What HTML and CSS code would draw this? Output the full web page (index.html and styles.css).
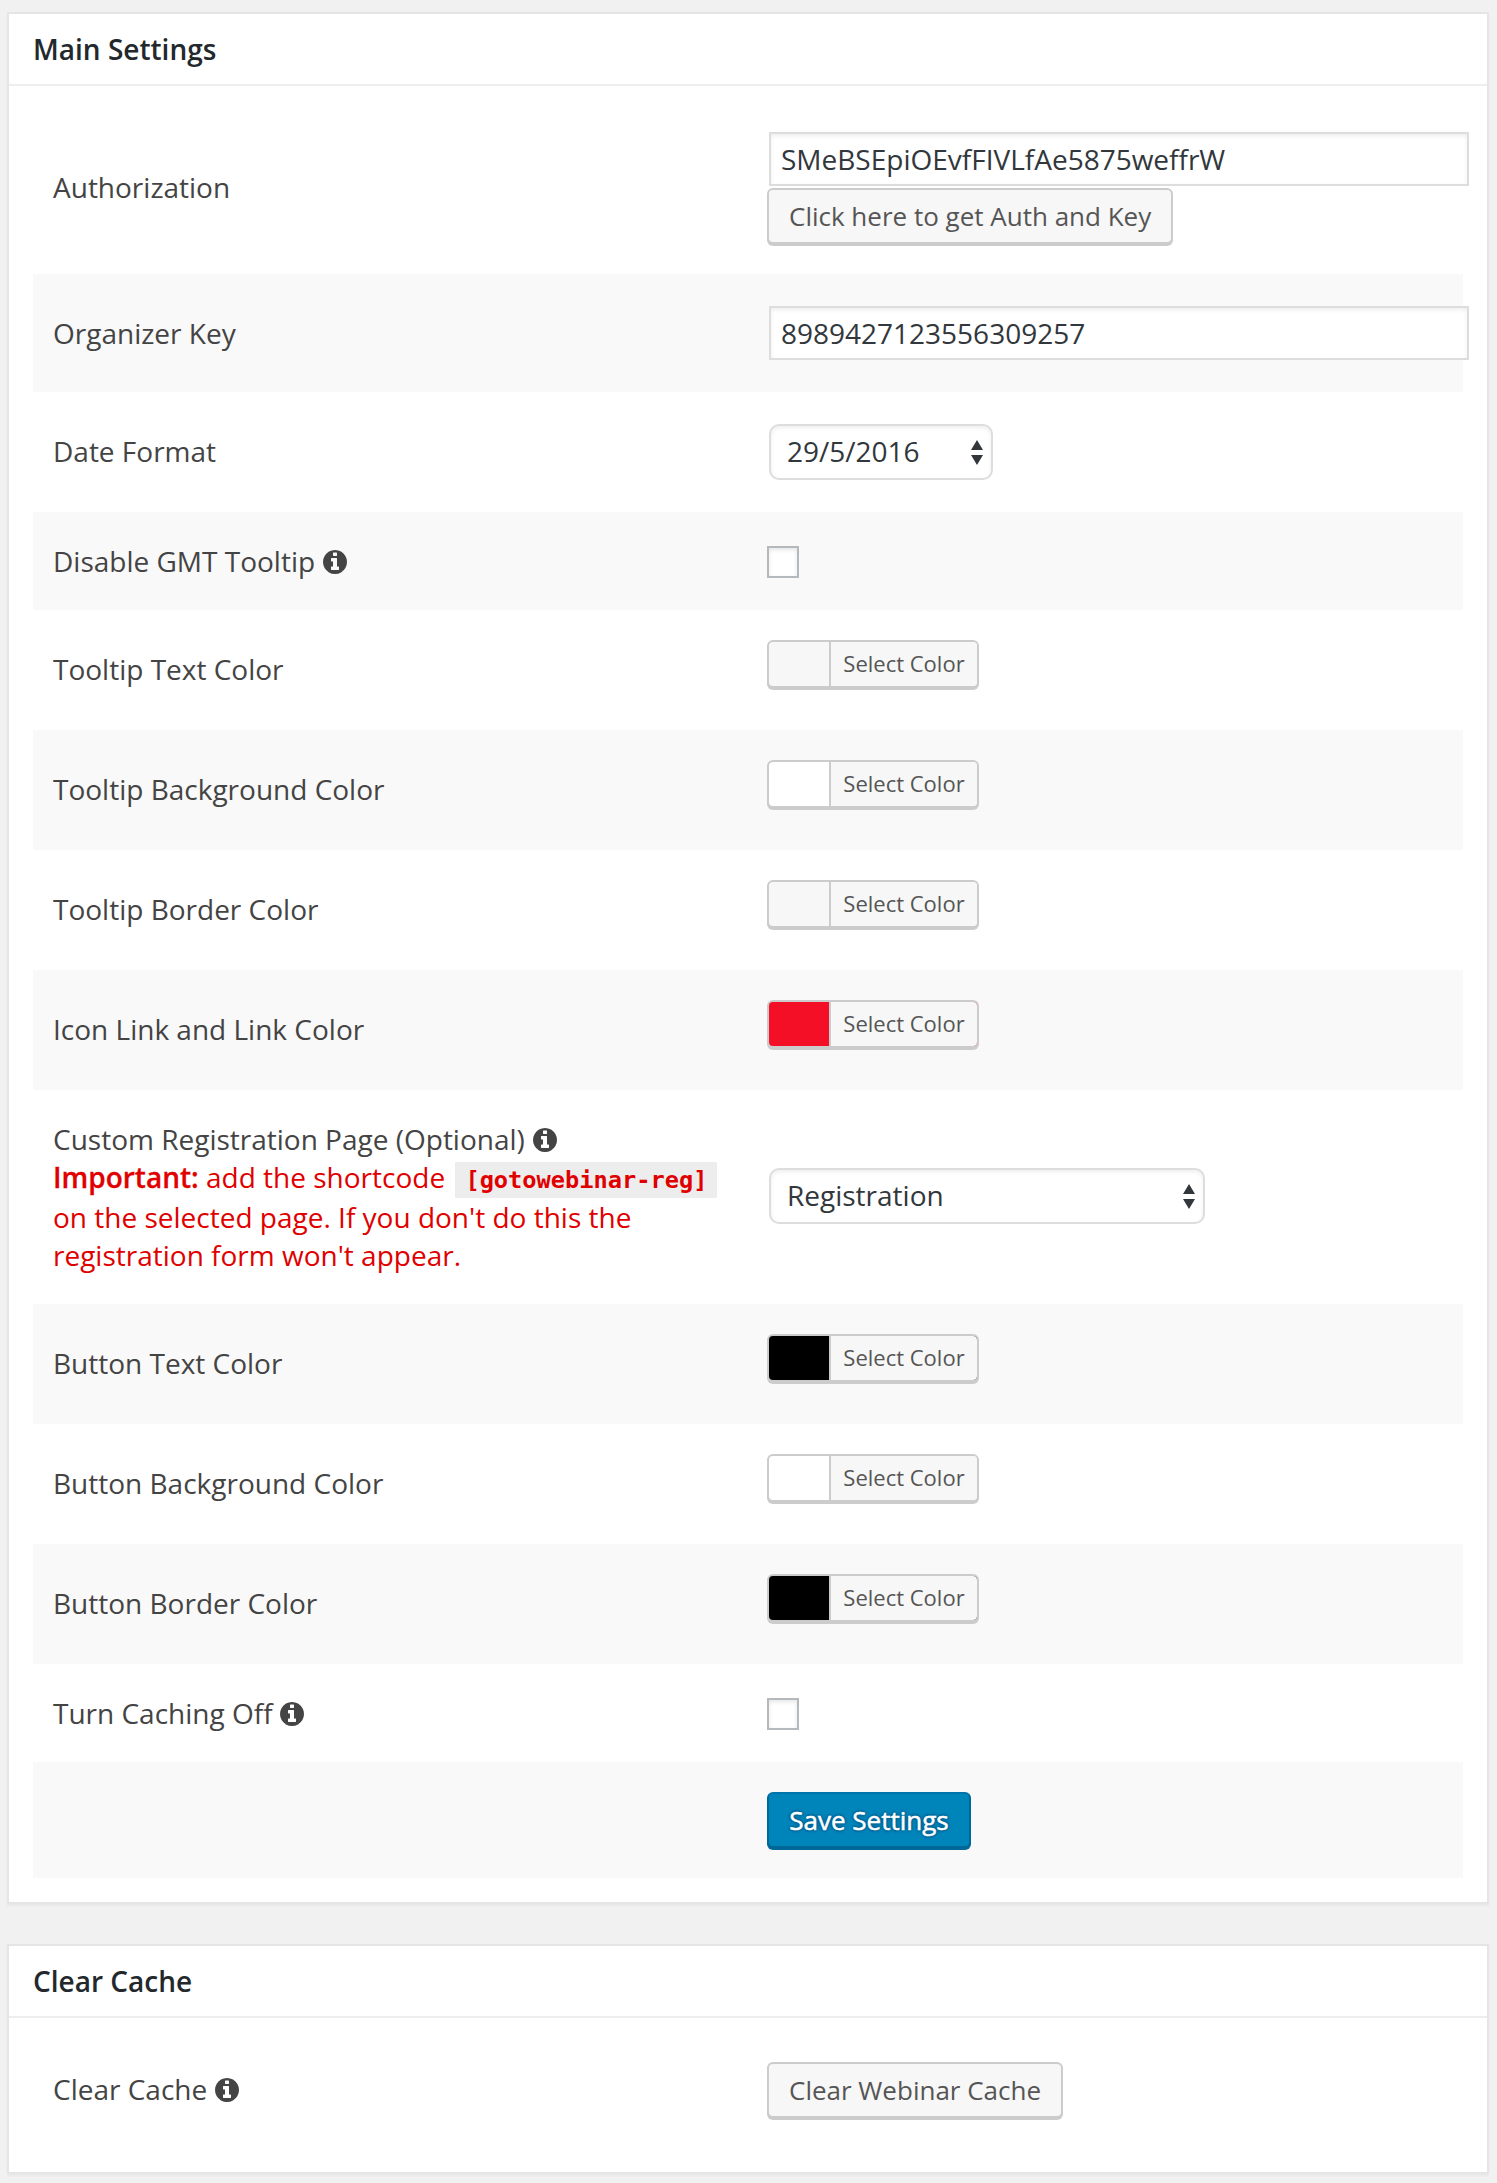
FILE: index.html
```html
<!DOCTYPE html>
<html lang="en">
<head>
<meta charset="utf-8">
<title>Settings</title>
<link rel="stylesheet" href="styles.css">
</head>
<body>
<svg class="sprite" aria-hidden="true">
  <symbol id="info" viewBox="0 128 1536 1536"><path d="M1024 1376v-160q0-14-9-23t-23-9h-96v-512q0-14-9-23t-23-9h-320q-14 0-23 9t-9 23v160q0 14 9 23t23 9h96v320h-96q-14 0-23 9t-9 23v160q0 14 9 23t23 9h448q14 0 23-9t9-23zm-128-896v-160q0-14-9-23t-23-9h-192q-14 0-23 9t-9 23v160q0 14 9 23t23 9h192q14 0 23-9t9-23zm640 416q0 209-103 385.5t-279.5 279.5-385.5 103-385.5-103-279.5-279.5-103-385.5 103-385.5 279.5-279.5 385.5-103 385.5 103 279.5 279.5 103 385.5z"/></symbol>
  <symbol id="arrows" viewBox="0 0 12 25"><path d="M6 0l6 10H0zM6 25L0 15h12z"/></symbol>
</svg>

<section class="card">
  <h2 class="card-title">Main Settings</h2>
  <div class="rows">
    <div class="row">
      <div class="label">Authorization</div>
      <div class="field field-auth">
        <input class="text" type="text" value="SMeBSEpiOEvfFIVLfAe5875weffrW">
        <button class="button">Click here to get Auth and Key</button>
      </div>
    </div>
    <div class="row">
      <div class="label">Organizer Key</div>
      <div class="field field-input"><input class="text" type="text" value="8989427123556309257"></div>
    </div>
    <div class="row">
      <div class="label label-raised">Date Format</div>
      <div class="field field-input">
        <div class="select select-date"><select><option>29/5/2016</option></select><svg class="arrows"><use href="#arrows"/></svg></div>
      </div>
    </div>
    <div class="row">
      <div class="label">Disable GMT Tooltip <svg class="info"><use href="#info"/></svg></div>
      <div class="field field-check"><input class="check" type="checkbox"></div>
    </div>
    <div class="row">
      <div class="label label-raised">Tooltip Text Color</div>
      <div class="field field-color"><button class="color light"><span>Select Color</span></button></div>
    </div>
    <div class="row">
      <div class="label label-raised">Tooltip Background Color</div>
      <div class="field field-color"><button class="color white"><span>Select Color</span></button></div>
    </div>
    <div class="row">
      <div class="label label-raised">Tooltip Border Color</div>
      <div class="field field-color"><button class="color light"><span>Select Color</span></button></div>
    </div>
    <div class="row">
      <div class="label label-raised">Icon Link and Link Color</div>
      <div class="field field-color"><button class="color red"><span>Select Color</span></button></div>
    </div>
    <div class="row row-registration">
      <div class="label">
        Custom Registration Page (Optional) <svg class="info"><use href="#info"/></svg>
        <div class="note"><strong>Important:</strong> add the shortcode <code>[gotowebinar-reg]</code><br>on the selected page. If you don't do this the<br>registration form won't appear.</div>
      </div>
      <div class="field field-page">
        <div class="select select-page"><select><option>Registration</option></select><svg class="arrows"><use href="#arrows"/></svg></div>
      </div>
    </div>
    <div class="row">
      <div class="label label-raised">Button Text Color</div>
      <div class="field field-color"><button class="color black"><span>Select Color</span></button></div>
    </div>
    <div class="row">
      <div class="label label-raised">Button Background Color</div>
      <div class="field field-color"><button class="color white"><span>Select Color</span></button></div>
    </div>
    <div class="row">
      <div class="label label-raised">Button Border Color</div>
      <div class="field field-color"><button class="color black"><span>Select Color</span></button></div>
    </div>
    <div class="row">
      <div class="label">Turn Caching Off <svg class="info"><use href="#info"/></svg></div>
      <div class="field field-check"><input class="check" type="checkbox"></div>
    </div>
    <div class="row">
      <div class="label"></div>
      <div class="field field-button"><button class="button primary">Save Settings</button></div>
    </div>
  </div>
</section>

<section class="card">
  <h2 class="card-title">Clear Cache</h2>
  <div class="rows">
    <div class="row">
      <div class="label label-raised">Clear Cache <svg class="info"><use href="#info"/></svg></div>
      <div class="field field-button"><button class="button">Clear Webinar Cache</button></div>
    </div>
  </div>
</section>
</body>
</html>
```
FILE: styles.css
```css
* { box-sizing: border-box; }

body {
  margin: 0;
  padding: 12px 8px 9px 7px;
  display: flex;
  flex-direction: column;
  gap: 40px;
  background: #f1f1f1;
  color: #444;
  font: 28px/38px "Open Sans", sans-serif;
}

button, input, select { margin: 0; font-family: inherit; }

.sprite { position: absolute; width: 0; height: 0; }

.card {
  background: #fff;
  border: 2px solid #e5e5e5;
  box-shadow: 0 2px 2px rgba(0, 0, 0, .04);
}

.card-title {
  margin: 0;
  padding: 16px 24px;
  border-bottom: 2px solid #eee;
  color: #23282d;
  font-size: 28px;
  font-weight: 600;
  line-height: 38px;
}

.rows { padding: 14px 24px 24px; }

.row {
  display: grid;
  grid-template-columns: 714px 716px;
  align-items: center;
}

.row:nth-child(even) { background: #f9f9f9; }

.label { padding: 0 20px; }
.label-raised { padding-bottom: 2px; }

.field {
  display: flex;
  flex-direction: column;
  align-items: flex-start;
  padding: 0 0 0 20px;
}

.field-auth { padding-top: 32px; padding-bottom: 30px; gap: 2px; }
.field-input { padding-top: 32px; padding-bottom: 32px; }
.field-check { padding-top: 34px; padding-bottom: 32px; }
.field-color { padding-top: 30px; padding-bottom: 42px; }
.field-button { padding-top: 30px; padding-bottom: 30px; }
.field-page { padding-bottom: 2px; }
.row-registration { padding: 30px 0; }

.text {
  width: 700px;
  height: 54px;
  margin-left: 2px;
  padding: 0 10px;
  flex: none;
  border: 2px solid #ddd;
  background: #fff;
  box-shadow: inset 0 2px 4px rgba(0, 0, 0, .07);
  color: #32373c;
  font-size: 28px;
}

.select {
  position: relative;
  height: 56px;
  margin-left: 2px;
}

.select-date { width: 224px; }
.select-page { width: 436px; }

.select select {
  appearance: none;
  width: 100%;
  height: 56px;
  padding: 0 16px 2px;
  border: 2px solid #ddd;
  border-radius: 10px;
  background: #fff;
  box-shadow: inset 0 2px 4px rgba(0, 0, 0, .07);
  color: #32373c;
  font-size: 28px;
}

.arrows {
  position: absolute;
  top: 15.5px;
  right: 10px;
  width: 12px;
  height: 25px;
  fill: #32373c;
}

.check {
  appearance: none;
  width: 32px;
  height: 32px;
  border: 2px solid #b4b9be;
  background: #fff;
  box-shadow: inset 0 2px 4px rgba(0, 0, 0, .1);
}

.button {
  height: 56px;
  padding: 0 20px;
  border: 2px solid #ccc;
  border-radius: 6px;
  background: #f7f7f7;
  box-shadow: 0 2px 0 #ccc;
  color: #555;
  font-size: 26px;
  line-height: 52px;
  white-space: nowrap;
}

.primary {
  width: 204px;
  border-color: #0073aa #006799 #006799;
  background: #0085ba;
  box-shadow: 0 2px 0 #006799;
  color: #fff;
  text-shadow: 0 -2px 2px #006799, 2px 0 2px #006799, 0 2px 2px #006799, -2px 0 2px #006799;
  -webkit-text-stroke: .5px #fff;
}

.color {
  height: 48px;
  padding: 0 0 0 60px;
  border: 2px solid #ccc;
  border-radius: 6px;
  box-shadow: 0 2px 0 #ccc;
  color: #555;
  font-size: 22px;
  line-height: 42px;
}

.color span {
  display: block;
  width: 148px;
  height: 44px;
  border-left: 2px solid #ccc;
  border-radius: 0 4px 4px 0;
  background: #f7f7f7;
  text-align: center;
}

.light { background: #f7f7f7; }
.white { background: #fff; }
.red { background: #f40f27; }
.black { background: #000; }

.info {
  width: 24px;
  height: 24px;
  margin-left: .5px;
  fill: #444;
  vertical-align: -2px;
}

.note { color: #e00000; }
.note strong { font-weight: 600; -webkit-text-stroke: .3px #e00000; }

code {
  display: inline-block;
  margin: 0 2px 0 3px;
  padding: 4px 10px;
  background: #ededed;
  font: bold 23.65px/28px "DejaVu Sans Mono", monospace;
}
```
